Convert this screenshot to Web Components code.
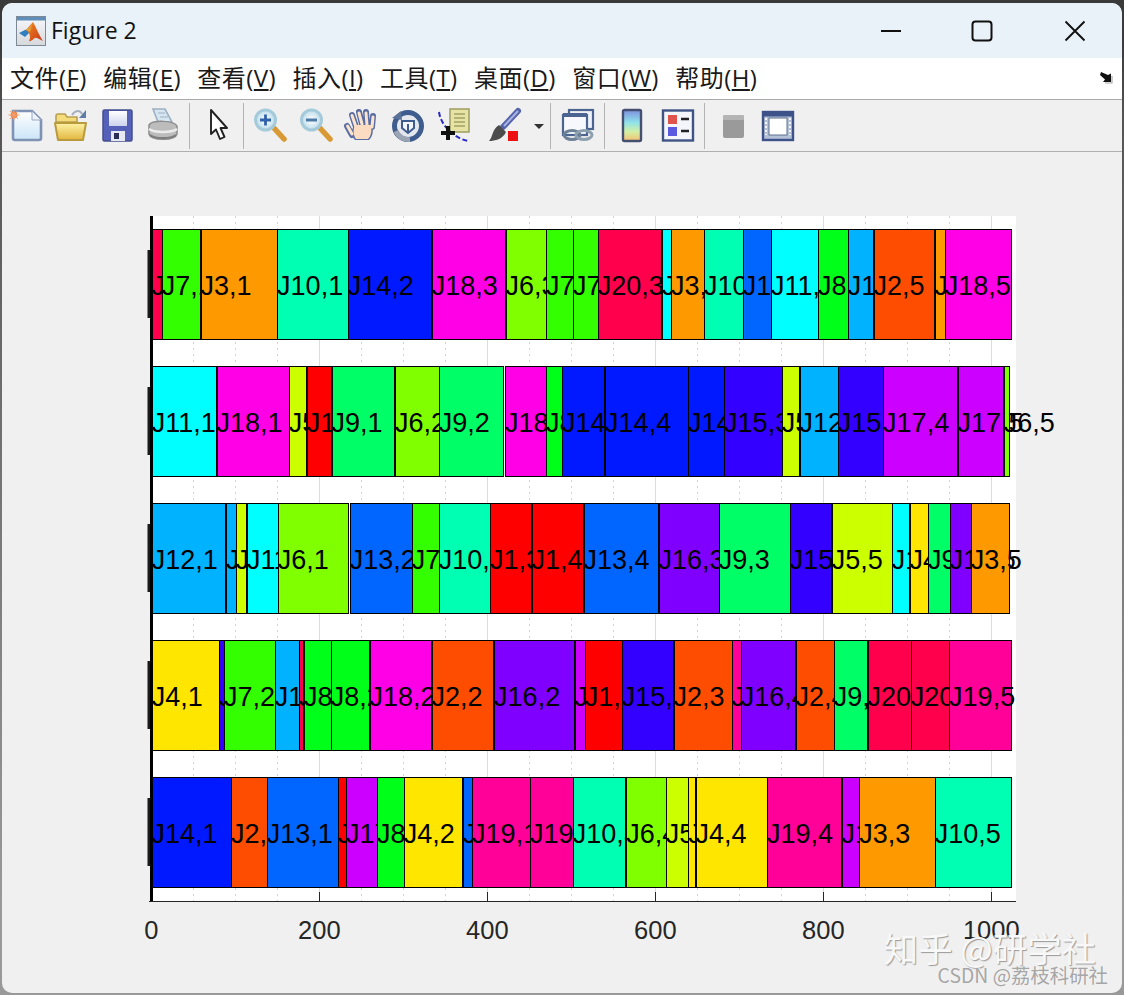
<!DOCTYPE html>
<html lang="zh">
<head>
<meta charset="utf-8">
<title>Figure 2</title>
<style>
  html, body { margin: 0; height: 100%; }
  body { background: linear-gradient(#3a3a3a 0, #3a3a3a 40px, #555 120px, #999 900px); overflow: hidden; }
</style>
</head>
<body>
<figure-window title="Figure 2"></figure-window>

<script>
const ICONS = {
  "new": `<defs><linearGradient id="p" x2="0" y2="1"><stop offset="0" stop-color="#fff"/><stop offset="1" stop-color="#cbe5f8"/></linearGradient></defs>
    <path d="M6 3H25L34 12V30a2 2 0 0 1-2 2H8a2 2 0 0 1-2-2Z" fill="url(#p)" stroke="#7f92b4" stroke-width="2.6"/>
    <path d="M25 3V12H34Z" fill="#eef3fa" stroke="#9aa8c4"/>
    <circle cx="7" cy="7" r="3.4" fill="#ee8448"/>
    <path d="M7 1.5V12.5M1.5 7H12.5M3 3L11 11M11 3L3 11" stroke="#f0a070" stroke-width="1"/>`,
  "open": `<defs><linearGradient id="p" x2="0" y2="1"><stop offset="0" stop-color="#fdf3a6"/><stop offset="1" stop-color="#e2b63e"/></linearGradient></defs>
    <path d="M3 12V8a2 2 0 0 1 2-2H12l2 3H24V14H3Z" fill="#f4dc7a" stroke="#b9a050" stroke-width="1.6"/>
    <path d="M2 15H33L30 32H5Z" fill="url(#p)" stroke="#b99a3c" stroke-width="2" stroke-linejoin="round"/>
    <path d="M19 7C22 2 27 2 29 6" fill="none" stroke="#a4aebd" stroke-width="2"/>
    <path d="M33 2V10H26Z" fill="#5f7ca4"/>`,
  "save": `<defs><linearGradient id="p" x2="0" y2="1"><stop offset="0" stop-color="#fff"/><stop offset="1" stop-color="#ccd4ee"/></linearGradient></defs>
    <rect x="4" y="2" width="29" height="31" rx="1.5" fill="#5560b8" stroke="#444e90" stroke-width="1.5"/>
    <rect x="10" y="3" width="18" height="15" fill="url(#p)"/>
    <rect x="12" y="23" width="14" height="10" fill="#e6e8f2"/>
    <rect x="15" y="25" width="5" height="6" fill="#2a2f55"/>`,
  "print": `<path d="M8 1H20L27 14H13Z" fill="#d6e6f0" stroke="#9db0c2" stroke-width="1.6"/>
    <path d="M13 5H20M15 9H23" stroke="#9db0c2"/>
    <path d="M4 17C7 12 29 12 32 18V26C30 33 6 33 4 26Z" fill="#bcbcbc" stroke="#8c8c8c" stroke-width="1.5"/>
    <path d="M4 21C10 25 26 25 32 21" fill="none" stroke="#ececec" stroke-width="2.6"/>
    <path d="M5 27C11 31 25 31 31 27" fill="none" stroke="#7d7d7d" stroke-width="1.8"/>`,
  "arrow": `<path d="M10 2V26L15 21.5L19 31L23.5 29L19.5 20H26Z" fill="#fff" stroke="#222" stroke-width="1.9" stroke-linejoin="round"/>`,
  "zoomin": `<defs><radialGradient id="p"><stop offset="0" stop-color="#fff"/><stop offset="1" stop-color="#bcdcea"/></radialGradient></defs>
    <path d="M21 19L32 31" stroke="#d99a35" stroke-width="5.5" stroke-linecap="round"/>
    <circle cx="13.5" cy="12" r="10" fill="url(#p)" stroke="#a5cbdb" stroke-width="3"/>
    <path d="M8 12H19M13.5 6.5V17.5" stroke="#2f62a8" stroke-width="2.8"/>`,
  "zoomout": `<defs><radialGradient id="p"><stop offset="0" stop-color="#fff"/><stop offset="1" stop-color="#bcdcea"/></radialGradient></defs>
    <path d="M21 19L32 31" stroke="#d99a35" stroke-width="5.5" stroke-linecap="round"/>
    <circle cx="13.5" cy="12" r="10" fill="url(#p)" stroke="#a5cbdb" stroke-width="3"/>
    <path d="M8 12H19" stroke="#4c7aa6" stroke-width="3"/>`,
  "pan": `<path d="M8 27L3 18M12 19L8 7M18 16L15 4M23 17L22 4M28 19L29 8" stroke="#5a6da2" stroke-width="6" stroke-linecap="round"/>
    <path d="M11 32C7 28 7 22 10 18H28C30 24 28 29 25 32Z" fill="#5a6da2"/>
    <path d="M8 26L3.5 18M12 19L8 7.5M18 16L15 5M23 17L22 5M28 19L29 9" stroke="#fbe3cd" stroke-width="3" stroke-linecap="round"/>
    <path d="M12 31C9 27 9 22 11 17H27C28 23 27 28 24 31Z" fill="#fbdcc2"/>`,
  "rotate": `<circle cx="18" cy="18" r="13.5" fill="#e4e8ee" stroke="#3f5c8e" stroke-width="5"/>
    <path d="M6 23A13.5 13.5 0 0 0 20 31.5" fill="none" stroke="#9aa4b2" stroke-width="5"/>
    <path d="M2 10L11 3L12 12Z" fill="#5b7298"/>
    <path d="M12 13H24V20L18 25L12 20Z" fill="#f2f5fa" stroke="#3f5c8e" stroke-width="2"/>
    <path d="M18 16V24" stroke="#3f5c8e" stroke-width="2"/>`,
  "cursor": `<rect x="14" y="1" width="19" height="23" fill="#e6e3a4" stroke="#a3a266" stroke-width="1.6"/>
    <path d="M18 6H29M18 10H29M18 14H29M18 18H29" stroke="#a3a266" stroke-width="1.4"/>
    <path d="M3 4C5 18 18 30 32 33" fill="none" stroke="#2a2ac8" stroke-width="2" stroke-dasharray="5 2.5"/>
    <path d="M5 25H19M12 18V32" stroke="#111" stroke-width="4"/>`,
  "brush": `<path d="M32 3L17 19" stroke="#5565aa" stroke-width="6" stroke-linecap="round"/>
    <path d="M32 3L18 18" stroke="#aab4e4" stroke-width="2"/>
    <path d="M13 17L20 24C17 31 9 33 3 33C7 29 6 21 13 17Z" fill="#4c4c4c"/>
    <rect x="22" y="23" width="10" height="10" fill="#ee1111"/>`,
  "drop": `<path d="M13 16H23L18 21Z" fill="#333"/>`,
  "link": `<rect x="9" y="2" width="24" height="19" fill="#eef1f8" stroke="#4b6490" stroke-width="2.2"/>
    <rect x="3" y="7" width="24" height="20" fill="#f6f8fc" stroke="#4b6490" stroke-width="2.2"/>
    <path d="M3 7H27" stroke="#4b6490" stroke-width="4"/>
    <ellipse cx="12" cy="27" rx="8" ry="4.5" fill="none" stroke="#6c8195" stroke-width="3"/>
    <ellipse cx="24" cy="27" rx="8" ry="4.5" fill="none" stroke="#8da0b0" stroke-width="3"/>`,
  "colorbar": `<defs><linearGradient id="p" x2="0" y2="1"><stop offset="0" stop-color="#7e8fe0"/><stop offset=".4" stop-color="#8fe2ea"/><stop offset=".7" stop-color="#d2f0a4"/><stop offset="1" stop-color="#f8bf70"/></linearGradient></defs>
    <rect x="9" y="2" width="18" height="31" rx="1.5" fill="url(#p)" stroke="#454f72" stroke-width="2.4"/>`,
  "legend": `<rect x="3" y="2.5" width="30" height="30" fill="#f4f6fc" stroke="#3f5484" stroke-width="2.4"/>
    <rect x="8" y="7" width="9" height="9" fill="#e0544c"/><rect x="8" y="19" width="9" height="9" fill="#5a5ae0"/>
    <path d="M21 11H29M21 23H29" stroke="#222" stroke-width="2.4"/>`,
  "square": `<rect x="8" y="7" width="21" height="23" rx="2" fill="#9a9a9a"/><path d="M8 12V9a2 2 0 0 1 2-2H27a2 2 0 0 1 2 2V12" fill="#b4b4b4"/>`,
  "frame": `<rect x="2" y="4" width="30" height="28" fill="#b4c0d6" stroke="#3d5288" stroke-width="2.4"/>
    <rect x="2" y="4" width="30" height="4.5" fill="#3d5288"/>
    <path d="M5 10V27M29 10V27" stroke="#f4f6fa" stroke-width="2" stroke-dasharray="2 2"/>
    <rect x="8" y="10" width="18" height="17" fill="#fff" stroke="#5e708e"/>`
};

class TitleBar extends HTMLElement {
  constructor() {
    super();
    this.attachShadow({ mode: "open" });
    this.shadowRoot.innerHTML = `
      <style>
        :host { display: flex; align-items: center; height: 55px; background: #e9f2f9; color: #111;
                font: 23px/1 "Open Sans", "Noto Sans", sans-serif; border-radius: 10px 10px 0 0; }
        .logo { margin-left: 14px; margin-right: 5px; display: block; }
        .title { flex: 1; }
        .btn { width: 92px; height: 55px; display: flex; align-items: center; justify-content: center; }
        .min { width: 90px; }
        .close { width: 94px; }
        svg { display: block; }
      </style>
      <svg class="logo" width="30" height="30" viewBox="0 0 30 30">
        <defs><linearGradient id="bg" x2="0" y2="1"><stop offset="0" stop-color="#f6f8fb"/><stop offset="1" stop-color="#d6d8dc"/></linearGradient>
        <linearGradient id="pk" x2="1" y2="1"><stop offset="0" stop-color="#f08c1e"/><stop offset="1" stop-color="#c8361a"/></linearGradient></defs>
        <rect x=".5" y=".5" width="29" height="29" fill="url(#bg)" stroke="#7d8a96"/>
        <rect x="1" y="1" width="28" height="3.5" fill="#5f8fb8"/>
        <path d="M3 17L10 13.5L14 16L9 21Z" fill="#2f7fc0"/>
        <path d="M10 14L17 6C20 11 23 19 27 25C24 24 21 21 19 22C17 23 15 26 13 25C15 21 14 17 10 14Z" fill="url(#pk)"/>
        <path d="M14 16L17 6C15 11 13 12 10 14Z" fill="#e2a13a"/>
      </svg>
      <span class="title"></span>
      <span class="btn min"><svg width="22" height="4" viewBox="0 0 22 4"><path d="M1 2H21" stroke="#111" stroke-width="2"/></svg></span>
      <span class="btn"><svg width="22" height="22" viewBox="0 0 22 22"><rect x="1.5" y="1.5" width="19" height="19" rx="3" fill="none" stroke="#111" stroke-width="2"/></svg></span>
      <span class="btn close"><svg width="22" height="22" viewBox="0 0 22 22"><path d="M1.5 1.5L20.5 20.5M20.5 1.5L1.5 20.5" stroke="#111" stroke-width="1.9"/></svg></span>`;
    this.shadowRoot.querySelector(".title").textContent = this.getAttribute("title");
  }
}
customElements.define("title-bar", TitleBar);

class MenuItem extends HTMLElement {
  constructor() {
    super();
    this.attachShadow({ mode: "open" });
    this.shadowRoot.innerHTML = `
      <style>
        :host { display: block; white-space: nowrap; }
        u { text-underline-offset: 2px; text-decoration-thickness: 1.5px; }
      </style>
      <span id="t"></span>`;
    const t = this.shadowRoot.getElementById("t");
    t.append(this.getAttribute("label") + "(");
    const u = document.createElement("u");
    u.textContent = this.getAttribute("key");
    t.append(u, ")");
  }
}
customElements.define("menu-item", MenuItem);

class MenuBar extends HTMLElement {
  constructor() {
    super();
    this.attachShadow({ mode: "open" });
    this.shadowRoot.innerHTML = `
      <style>
        :host { display: flex; align-items: center; gap: 16.4px; height: 39px; padding: 0 7px 2px 8px; background: #fff;
                color: #1a1a1a; border-bottom: 1px solid #a9a9a9;
                font: 24px/1 "Open Sans", "Noto Sans CJK SC", sans-serif; letter-spacing: .45px; }
        svg { margin-left: auto; display: block; }
      </style>
      <slot></slot>
      <svg width="16" height="13" viewBox="0 0 16 13">
        <path d="M2 1L9 4L12 2.5V11H4L6 8.5L1 4Z" fill="#111"/>
        <path d="M13 5V12H6" fill="none" stroke="#aaa" stroke-width="1.2"/>
      </svg>`;
  }
}
customElements.define("menu-bar", MenuBar);

class ToolButton extends HTMLElement {
  constructor() {
    super();
    this.attachShadow({ mode: "open" });
    const w = this.getAttribute("width") || 46;
    this.shadowRoot.innerHTML = `
      <style>
        :host { display: flex; align-items: center; justify-content: center; width: ${w}px; height: 51px; flex: none; }
        svg { display: block; overflow: visible; }
      </style>
      <svg width="36" height="36" viewBox="0 0 36 36">${ICONS[this.getAttribute("icon")]}</svg>`;
  }
}
customElements.define("tool-button", ToolButton);

class ToolSep extends HTMLElement {
  constructor() {
    super();
    this.attachShadow({ mode: "open" });
    this.shadowRoot.innerHTML = `
      <style>
        :host { display: block; width: 1px; height: 46px; background: #b4b4b4; flex: none; }
      </style>`;
  }
}
customElements.define("tool-sep", ToolSep);

class ToolBar extends HTMLElement {
  constructor() {
    super();
    this.attachShadow({ mode: "open" });
    this.shadowRoot.innerHTML = `
      <style>
        :host { display: flex; align-items: center; height: 51px; background: #f0f0f0; border-bottom: 1px solid #b0b0b0; }
      </style>
      <slot></slot>`;
  }
}
customElements.define("tool-bar", ToolBar);

// label:start, * marks a double line before the segment, ** a wider one, ~ a small white gap
const ROWS = [
  { y: 229, end: 1011.7, segs: "J20,1:152 J7,1:162.3 J3,1:201* J10,1:277.7 J14,2:348.3 J18,3:432.3* J6,3:506* J7,3:546.7 J7,4:573.7 J20,3:598.3 J11,3:662.7* J3,2:671.7 J10,4:704.7 J13,3:743.3 J11,4:771.7 J8,4:818.7 J12,4:848.3 J2,5:874* J3,4:935* J18,5:945.3" },
  { y: 366, end: 1009.3, segs: "J11,1:152.3 J18,1:217* J5,1:289.3 J1,1:307.3* J9,1:332* J6,2:395.7* J9,2:439.3 J18,4:505.7~ J8,5:546.7 J14,3:562.7 J14,4:605.7* J14,5:688.7 J15,3:724.7 J5,4:782.3 J12,5:800* J15,2:838.3 J17,4:883.7 J17,5:958* J6,5:1004.3*" },
  { y: 503, end: 1009.3, segs: "J12,1:152.3 J12,2:226.7* J5,2:236.3 J11,2:247.7* J6,1:278.3 J13,2:350.3** J7,5:412.3 J10,2:439.3 J1,3:490.7 J1,4:532* J13,4:584* J16,3:659* J9,3:719.3 J15,4:790.3 J5,5:832.3* J11,5:892.3 J4,5:910* J9,4:928.7 J16,5:950.3 J3,5:971.3" },
  { y: 640, end: 1011.7, segs: "J4,1:152.3 J15,1:219.3 J7,2:224.7 J12,3:275.3 J20,2:299.3 J8,1:304.7* J8,2:331.3 J18,2:370* J2,2:432* J16,2:494.7* J17,3:575* J1,5:585.3 J15,5:622.3 J2,3:674* J19,3:732 J16,4:741.3 J2,4:796* J9,5:834.3 J20,4:868* J20,5:911.3 J19,5:949.7" },
  { y: 777, end: 1011.7, segs: "J14,1:152 J2,1:231.7 J13,1:267.3 J1,2:338.3 J17,1:346.7 J8,3:377.7 J4,2:404.3 J13,5:463.7* J19,1:472.7 J19,2:530.7 J10,3:573.3 J6,4:626.8* J5,3:666.3 J4,3:688.8 J4,4:696* J19,4:767.5 J17,2:842* J3,3:859.8 J10,5:935.4" }
];

const jobColor = (job) => `hsl(${(job - 1) * 18} 100% 50%)`;

class GanttChart extends HTMLElement {
  constructor() {
    super();
    this.attachShadow({ mode: "open" });
    let grid = "", bars = "", left = "", ticks = "";
    const xOf = (v) => 151.3 + v * 0.84;
    for (let v = 0; v <= 1000; v += 50) {
      const x = Math.floor(xOf(v)) + 0.5;
      if (v % 200 === 0) {
        if (v > 0) {
          grid += `<path d="M${x} 216V902" stroke="#dcdcdc"/><path d="M${x} 892V902" stroke="#262626"/>`;
        }
        ticks += `<text x="${xOf(v)}" y="938.5" class="tick">${v}</text>`;
      } else {
        grid += `<path d="M${x} 216V902" stroke="#d4d4d4" stroke-dasharray="2 4"/>`;
      }
    }
    const px = (v) => Math.floor(v) + 0.5;
    ROWS.forEach((row) => {
      const segs = row.segs.split(" ").map((s) => {
        const [label, rest] = s.split(":");
        return { label, start: parseFloat(rest), gap: rest.replace(/[0-9.]/g, "") };
      });
      segs.forEach((s, i) => {
        const next = segs[i + 1];
        let end = next ? next.start : row.end;
        if (next && next.gap === "*") end -= 1;
        if (next && next.gap === "**") end -= 2;
        if (next && next.gap === "~") end -= 2;
        const job = parseInt(s.label.slice(1));
        bars += `<rect x="${px(s.start)}" y="${row.y + 0.5}" width="${px(end) - px(s.start)}" height="110" fill="${jobColor(job)}" stroke="#000"/>`;
        bars += `<text x="${s.start - 0.6}" y="${row.y + 66}" class="seg">${s.label}</text>`;
      });
      left += `<rect x="147.5" y="${row.y + 21}" width="3" height="68" fill="#1a1a1a"/>`;
    });
    this.shadowRoot.innerHTML = `
      <style>
        :host { display: block; width: 990px; height: 750px; }
        svg { display: block; }
        text { font-family: "Liberation Sans", Arial, sans-serif; }
        .seg { font-size: 27px; fill: #000; }
        .tick { font-size: 25.5px; fill: #262626; text-anchor: middle; }
      </style>
      <svg width="990" height="750" viewBox="130 210 990 750">
        <rect x="150" y="216" width="866" height="686" fill="#fff"/>
        ${grid}
        ${bars}
        ${left}
        <rect x="150" y="216" width="3" height="686" fill="#000"/>
        <path d="M149 901.5H1016" stroke="#262626"/>
        ${ticks}
      </svg>`;
  }
}
customElements.define("gantt-chart", GanttChart);

class WaterMark extends HTMLElement {
  constructor() {
    super();
    this.attachShadow({ mode: "open" });
    this.shadowRoot.innerHTML = `
      <style>
        :host { position: absolute; right: 14px; bottom: 7px; display: flex; flex-direction: column; align-items: flex-end;
                font-family: "Noto Sans CJK SC", sans-serif; white-space: nowrap; }
        .big { font-size: 34.4px; line-height: 36px; margin-bottom: -1px; color: #f8f8f8; text-shadow: 1px 1px 1px #9a9a9a; margin-right: 12px; }
        .small { font-size: 19.4px; line-height: 22px; color: #a6a6a6; text-shadow: 1px 0 0 #f8f8f8; }
      </style>
      <span class="big">知乎 @研学社</span>
      <span class="small">CSDN @荔枝科研社</span>`;
  }
}
customElements.define("water-mark", WaterMark);

class FigureWindow extends HTMLElement {
  constructor() {
    super();
    this.attachShadow({ mode: "open" });
    const tools = [
      ["new"], ["open"], ["save"], ["print"],
      ["|", 3, 6], ["arrow"], ["|", 1, 3], ["zoomin"], ["zoomout"], ["pan"], ["rotate"], ["cursor"],
      ["brush", 54], ["drop", 16], ["|", 3, 4], ["link"], ["|", 3, 4], ["colorbar"], ["legend"],
      ["|", 3, 5], ["square"], ["frame"]
    ].map(([n, a, b]) => n === "|"
      ? `<tool-sep style="margin:0 ${b}px 0 ${a}px"></tool-sep>`
      : `<tool-button icon="${n}"${a ? ` width="${a}"` : ""}></tool-button>`).join("");
    const menus = [["文件", "F"], ["编辑", "E"], ["查看", "V"], ["插入", "I"], ["工具", "T"], ["桌面", "D"], ["窗口", "W"], ["帮助", "H"]]
      .map(([l, k]) => `<menu-item label="${l}" key="${k}"></menu-item>`).join("");
    this.shadowRoot.innerHTML = `
      <style>
        :host { display: flex; flex-direction: column; position: relative; height: 990px; margin: 3px 2px 2px 2px;
                background: #f0f0f0; border-radius: 10px; overflow: hidden; }
        .pane { position: relative; flex: 1; padding: 58px 0 0 128px; }
      </style>
      <title-bar title="${this.getAttribute("title")}"></title-bar>
      <menu-bar>${menus}</menu-bar>
      <tool-bar>${tools}</tool-bar>
      <div class="pane">
        <gantt-chart></gantt-chart>
        <water-mark></water-mark>
      </div>`;
  }
}
customElements.define("figure-window", FigureWindow);
</script>
</body>
</html>
